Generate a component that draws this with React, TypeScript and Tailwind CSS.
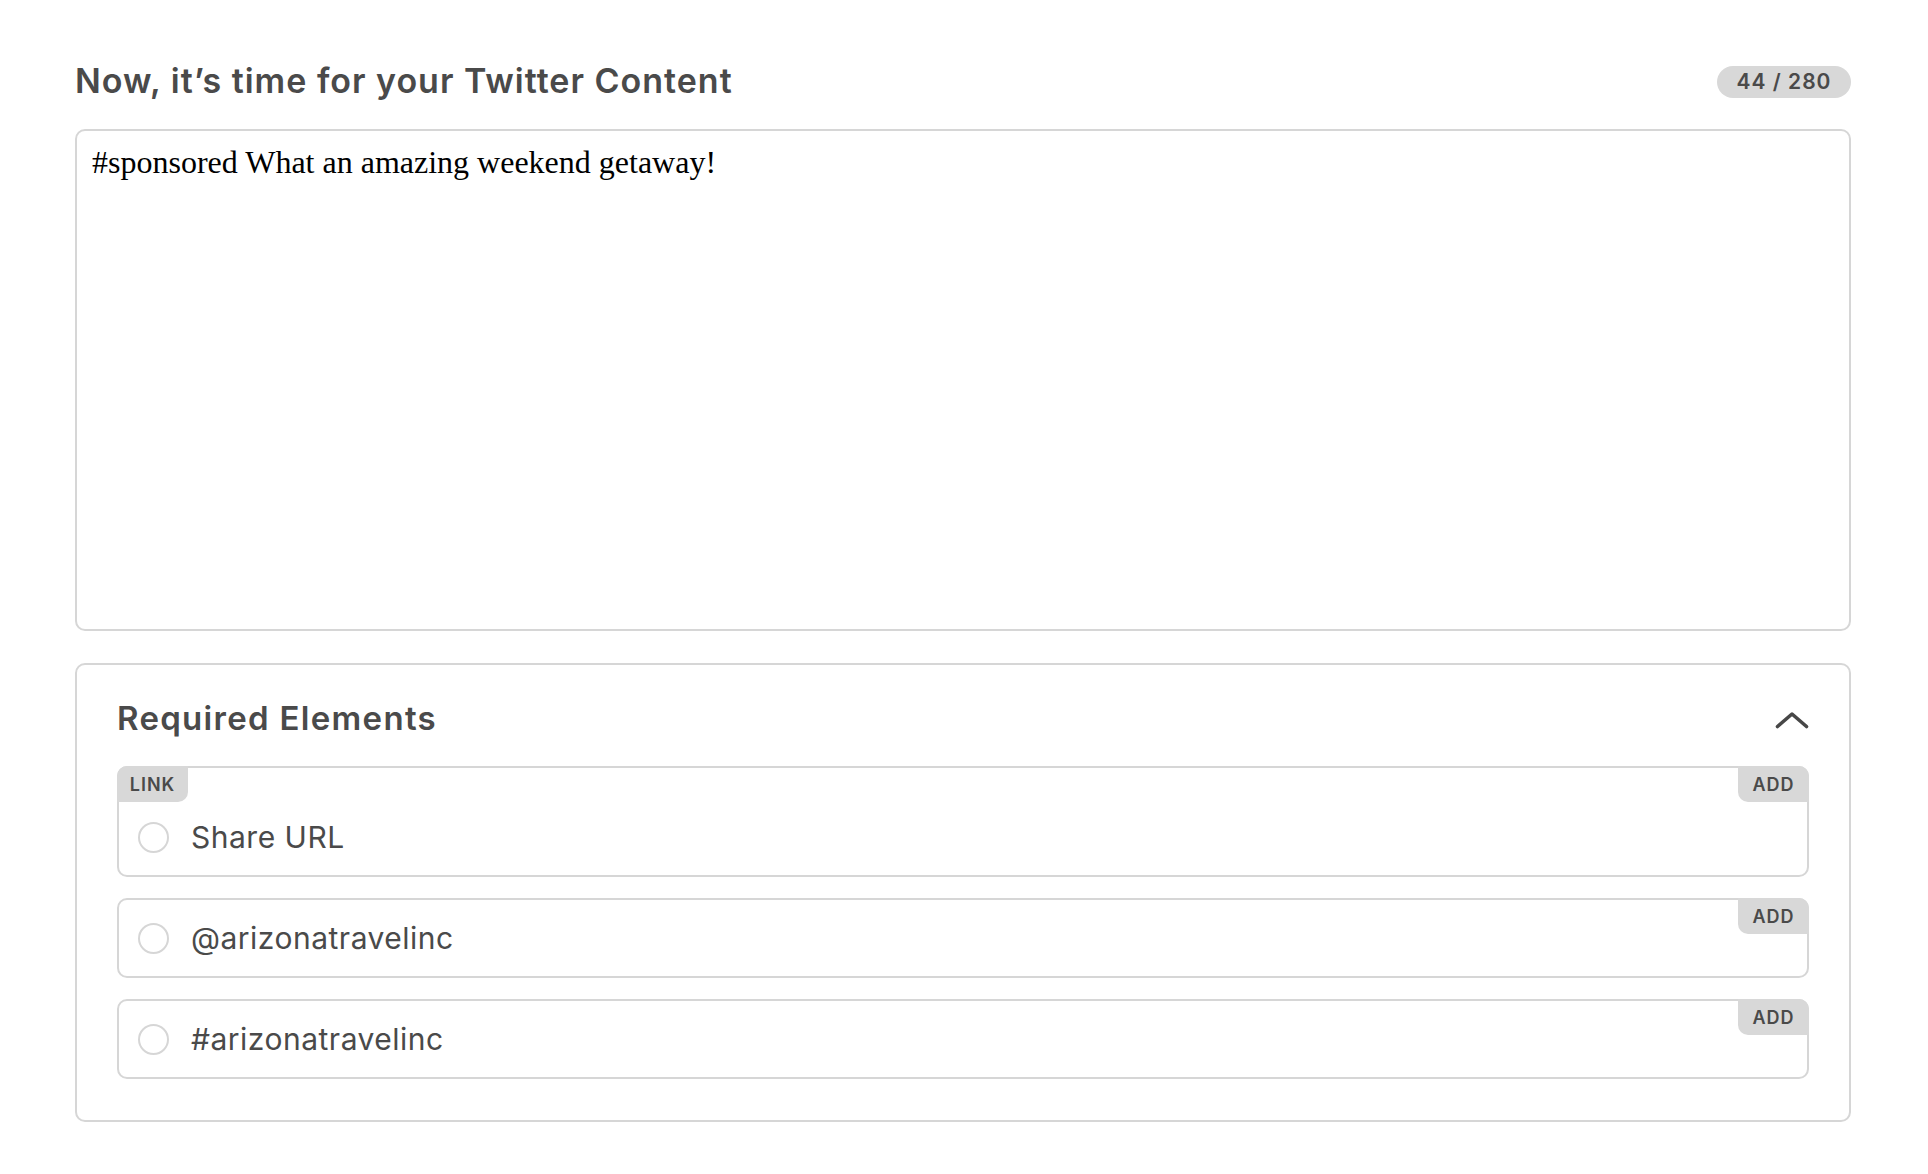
import { useState } from 'react'

interface RequiredItem {
  id: string
  label: string
  tag?: string
}

const items: RequiredItem[] = [
  { id: 'url', label: 'Share URL', tag: 'LINK' },
  { id: 'mention', label: '@arizonatravelinc' },
  { id: 'hashtag', label: '#arizonatravelinc' },
]

const sans = "font-['Inter','Lato',sans-serif]"

function ChevronUp() {
  return (
    <svg width="34" height="18" viewBox="0 0 34 18" fill="none">
      <path
        d="M2.5 15.5 L17 3 L31.5 15.5"
        stroke="#474747"
        strokeWidth="3.6"
        strokeLinecap="round"
        strokeLinejoin="round"
      />
    </svg>
  )
}

export default function App() {
  const [text, setText] = useState('#sponsored What an amazing weekend getaway! ')
  const [open, setOpen] = useState(true)

  return (
    <main className={`min-h-screen bg-white pt-[66px] ${sans}`}>
      <div className="ml-[75px] w-[1776px]">
        <div className="flex h-[32px] items-center justify-between">
          <h1 className="pb-[3px] text-[34px] font-semibold leading-[32px] tracking-[1px] text-[#4a4a4a]">
            Now, it&#8217;s time for your Twitter Content
          </h1>
          <span className="flex h-[32px] w-[134px] items-center justify-center rounded-full bg-[#d8d8d8] text-[21px] font-semibold tracking-[1px] text-[#4a4a4a]">
            {text.length} / 280
          </span>
        </div>

        <textarea
          value={text}
          onChange={(e) => setText(e.target.value)}
          className="mt-[31px] block h-[502px] w-full resize-none rounded-[10px] border-2 border-[#d6d6d6] bg-white px-[15px] py-[13px] font-['Liberation_Serif','Times_New_Roman',serif] text-[32px] leading-[37px] text-black outline-none"
        />

        <section className="mt-[32px] rounded-[10px] border-2 border-[#d6d6d6] px-[40px] pb-[41px] pt-[34px]">
          <div className="flex h-[40px] items-center justify-between">
            <h2 className="text-[33px] font-semibold tracking-[1.3px] text-[#4a4a4a]">
              Required Elements
            </h2>
            <button onClick={() => setOpen(!open)} className="pt-[1px]">
              <ChevronUp />
            </button>
          </div>

          {open && (
            <div className="mt-[27px] flex flex-col gap-[21px]">
              {items.map((item) => (
                <div
                  key={item.id}
                  className="relative rounded-[10px] border-2 border-[#d6d6d6]"
                >
                  {item.tag && (
                    <span className="absolute left-[-2px] top-[-2px] flex h-[36px] w-[71px] items-center justify-center rounded-br-[10px] rounded-tl-[10px] bg-[#d8d8d8] text-[18px] font-semibold tracking-[1px] text-[#4a4a4a]">
                      {item.tag}
                    </span>
                  )}
                  <button className="absolute right-[-2px] top-[-2px] flex h-[36px] w-[71px] items-center justify-center rounded-bl-[10px] rounded-tr-[10px] bg-[#d8d8d8] text-[18px] font-semibold tracking-[1px] text-[#4a4a4a]">
                    ADD
                  </button>
                  <div className={`flex h-[76px] items-center gap-[22px] pl-[19px] ${item.tag ? 'mt-[31px]' : ''}`}>
                    <span className="h-[31px] w-[31px] rounded-full border-2 border-[#d6d6d6]" />
                    <span className="text-[30px] tracking-[0.5px] text-[#4a4a4a]">
                      {item.label}
                    </span>
                  </div>
                </div>
              ))}
            </div>
          )}
        </section>
      </div>
    </main>
  )
}
